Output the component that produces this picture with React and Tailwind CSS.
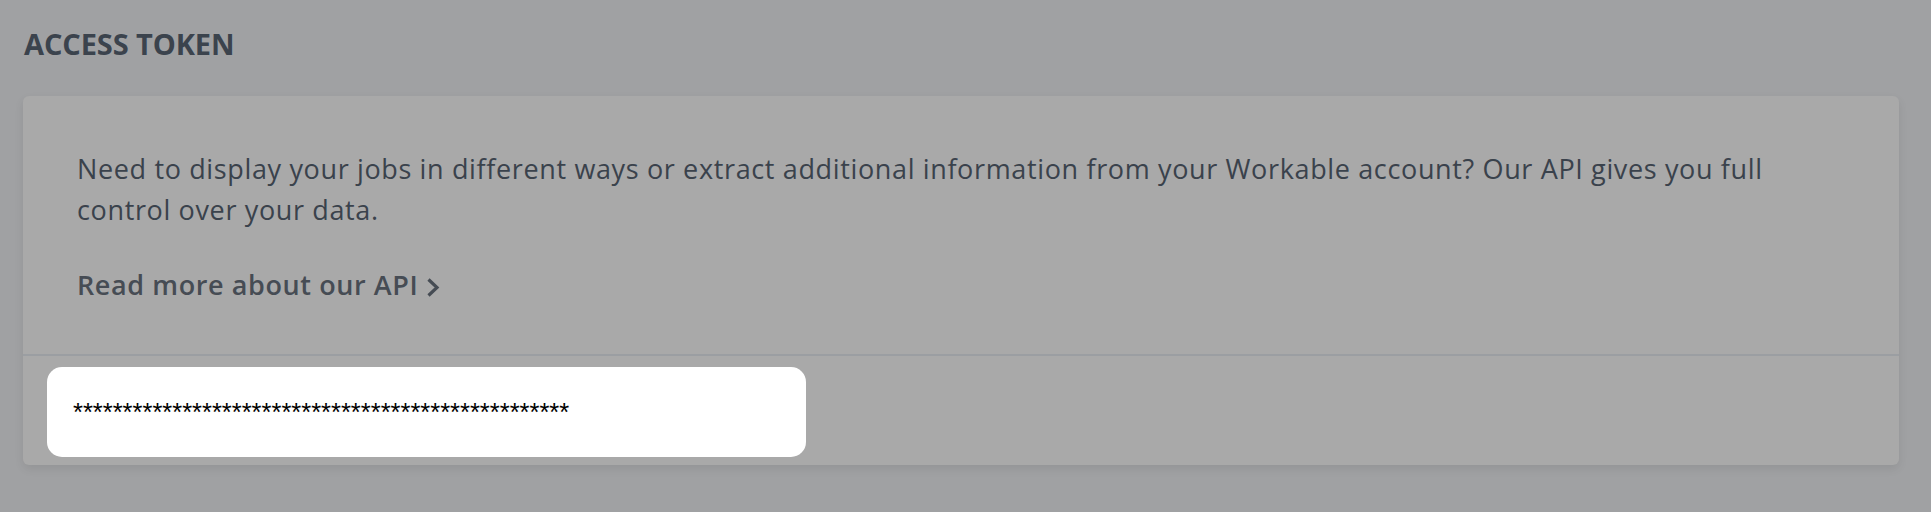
import React from 'react'

const AccessToken = () => {
  return (
    <div className="w-[1931px] h-[512px] overflow-hidden bg-[#a0a1a3] pl-[23px] pr-[32px] pt-[24px] font-['Open_Sans',sans-serif]">
      <h2 className="h-[40px] pl-[1px] text-[29px] font-bold leading-[40px] tracking-[-0.1px] text-[#3b434d]">
        ACCESS TOKEN
      </h2>

      <div className="mt-[32px] w-[1876px] rounded-[6px] bg-[#a9a9a9] shadow-[0_4px_10px_rgba(0,0,0,0.08)]">
        <div className="px-[54px] pt-[52px] pb-[49px]">
          <p className="max-w-[1730px] text-[27px] leading-[41px] tracking-[0.64px] text-[#3a424c]">
            Need to display your jobs in different ways or extract additional information from your Workable account? Our API gives you full control over your data.
          </p>
          <a className="mt-[34px] flex items-center gap-[8px] text-[27px] font-semibold leading-[41px] tracking-[0.6px] text-[#464c54]">
            Read more about our API
            <svg width="14" height="21" viewBox="0 0 14 21" fill="none" className="mt-[5px]">
              <path d="M2.5 2.5 L11 10.5 L2.5 18.5" stroke="#464c54" strokeWidth="3.2" />
            </svg>
          </a>
        </div>

        <div className="border-t-2 border-[#9b9ea2] px-[24px] pt-[11px] pb-[8px]">
          <div className="flex h-[90px] w-[759px] items-center rounded-[15px] bg-white pl-[26px] font-['Liberation_Sans',Arial,sans-serif] text-[25.5px] leading-none text-black">
            <span className="mt-[1px]">**************************************************</span>
          </div>
        </div>
      </div>
    </div>
  )
}

export default AccessToken
